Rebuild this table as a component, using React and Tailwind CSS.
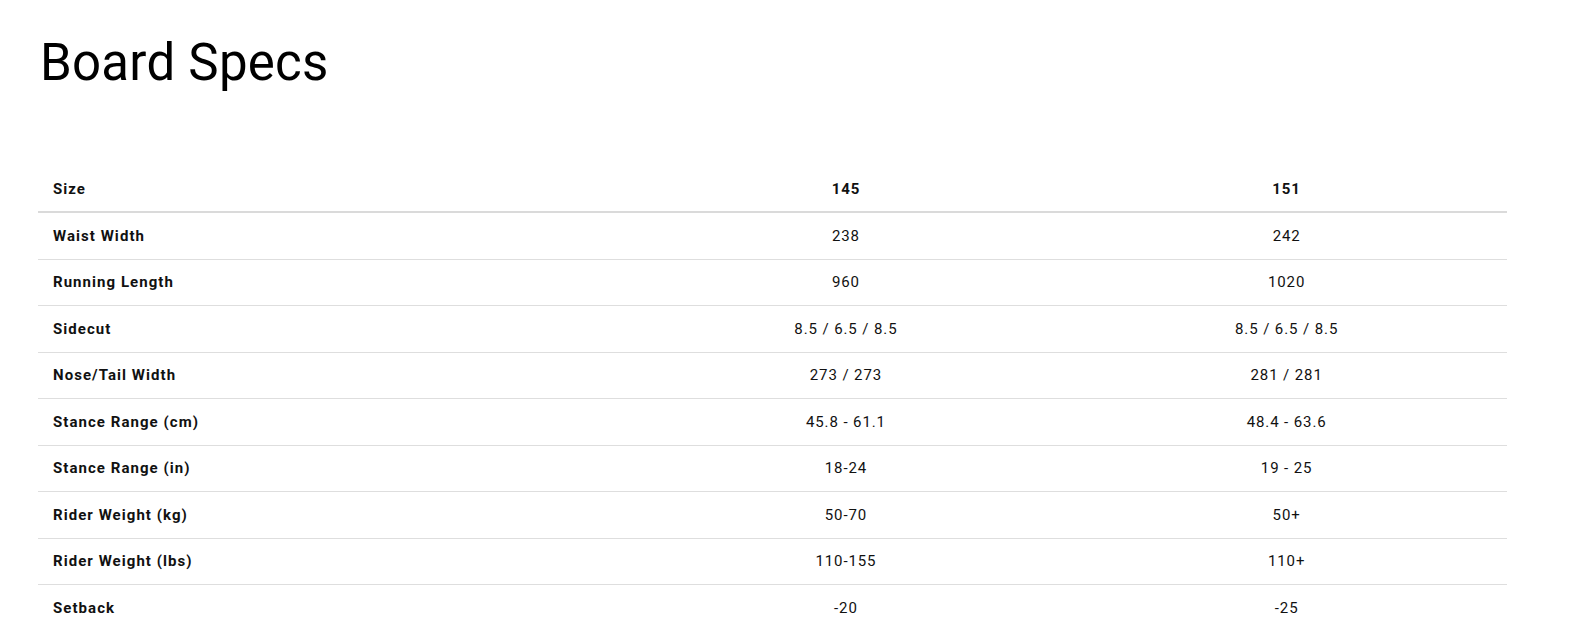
const specs = [
  { label: "Waist Width", values: ["238", "242"] },
  { label: "Running Length", values: ["960", "1020"] },
  { label: "Sidecut", values: ["8.5 / 6.5 / 8.5", "8.5 / 6.5 / 8.5"] },
  { label: "Nose/Tail Width", values: ["273 / 273", "281 / 281"] },
  { label: "Stance Range (cm)", values: ["45.8 - 61.1", "48.4 - 63.6"] },
  { label: "Stance Range (in)", values: ["18-24", "19 - 25"] },
  { label: "Rider Weight (kg)", values: ["50-70", "50+"] },
  { label: "Rider Weight (lbs)", values: ["110-155", "110+"] },
  { label: "Setback", values: ["-20", "-25"] },
];

export default function App() {
  return (
    <div
      className="min-h-[638px] bg-white pl-[38px] pr-[83px] pt-[37px] text-[#111]"
      style={{ fontFamily: "Roboto, 'Liberation Sans', sans-serif" }}
    >
      <h1 className="text-[51px] leading-none font-normal tracking-[0.005em] pl-[2px] text-black">
        Board Specs
      </h1>

      <div className="mt-[79px] text-[15px] tracking-[0.06em]">
        <div className="grid grid-cols-[40%_30%_30%] h-[46px] items-center border-b-2 border-[#dadada] font-bold">
          <div className="pl-[15px] tracking-[0.07em]">Size</div>
          <div className="text-center">145</div>
          <div className="text-center">151</div>
        </div>
        {specs.map((row, index) => (
          <div
            key={row.label}
            className={`grid grid-cols-[40%_30%_30%] h-[46.5px] items-center ${
              index === specs.length - 1 ? "" : "border-b border-[#dedede]"
            }`}
          >
            <div className="pl-[15px] font-bold tracking-[0.07em]">{row.label}</div>
            {row.values.map((v, i) => (
              <div key={i} className="text-center">
                {v}
              </div>
            ))}
          </div>
        ))}
      </div>
    </div>
  );
}
